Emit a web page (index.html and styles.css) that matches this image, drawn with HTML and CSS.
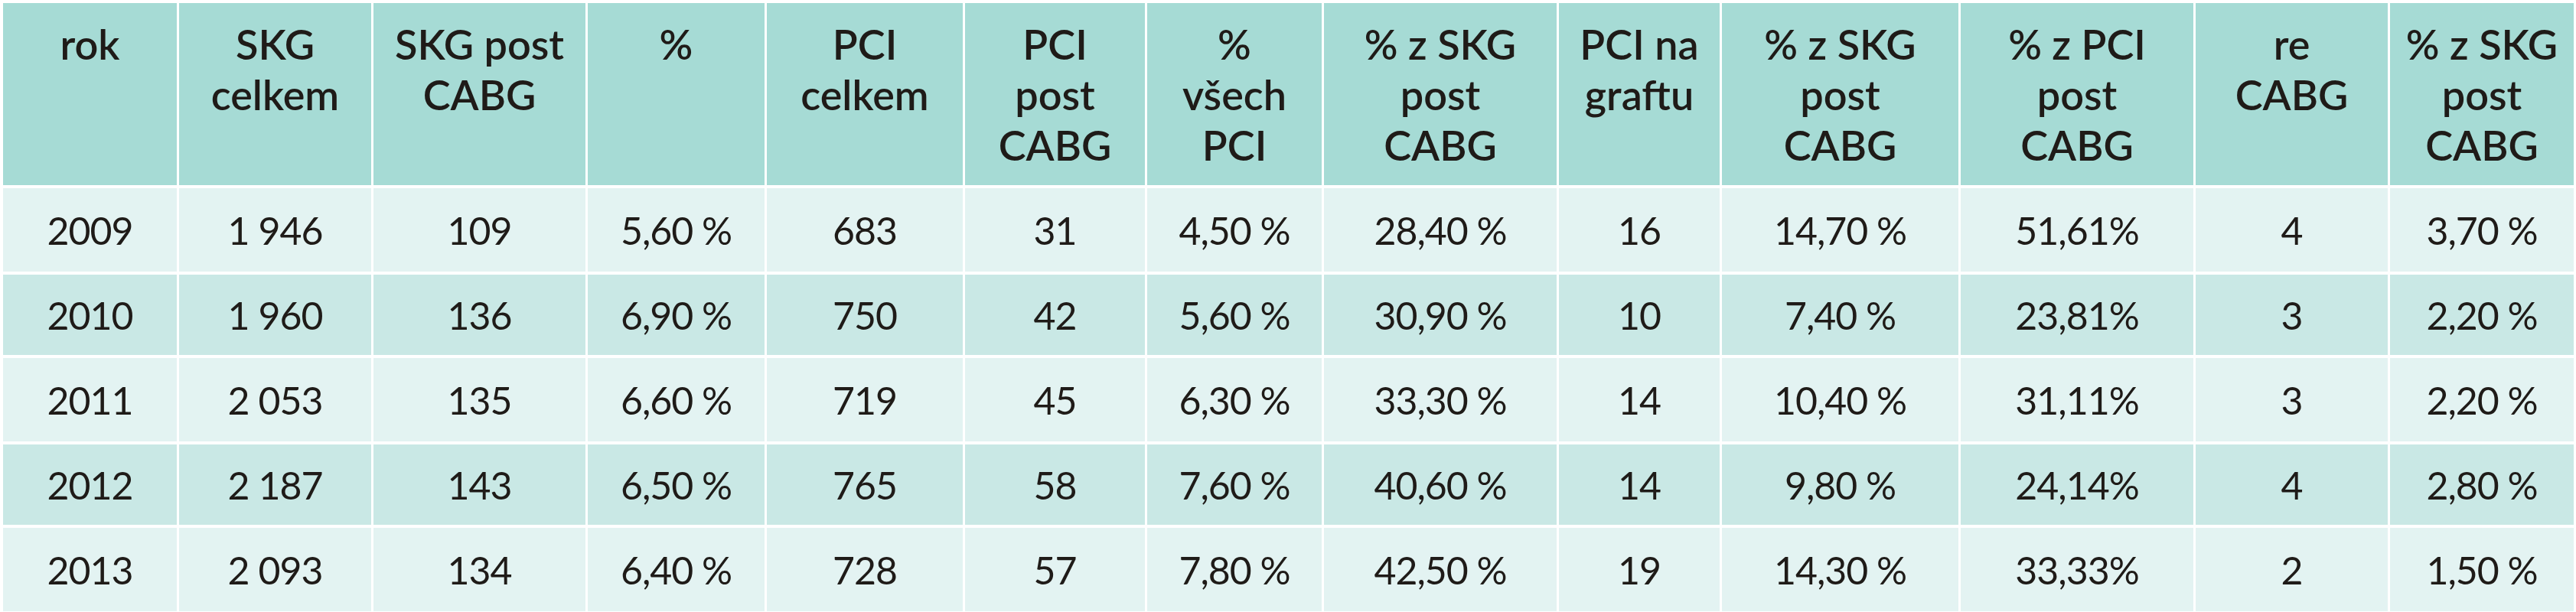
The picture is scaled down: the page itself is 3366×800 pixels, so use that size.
FILE: index.html
```html
<!DOCTYPE html>
<html lang="cs">
<head>
<meta charset="utf-8">
<title>SKG a PCI post CABG</title>
<link rel="stylesheet" href="styles.css">
</head>
<body>
<table class="data">
  <colgroup>
    <col class="c1"><col class="c2"><col class="c3"><col class="c4"><col class="c5"><col class="c6"><col class="c7"><col class="c8"><col class="c9"><col class="c10"><col class="c11"><col class="c12"><col class="c13">
  </colgroup>
  <thead>
    <tr>
      <th>rok</th>
      <th>SKG<br>celkem</th>
      <th>SKG post<br>CABG</th>
      <th>%</th>
      <th>PCI<br>celkem</th>
      <th>PCI<br>post<br>CABG</th>
      <th>%<br>všech<br>PCI</th>
      <th>% z SKG<br>post<br>CABG</th>
      <th>PCI na<br>graftu</th>
      <th>% z SKG<br>post<br>CABG</th>
      <th>% z PCI<br>post<br>CABG</th>
      <th>re<br>CABG</th>
      <th>% z SKG<br>post<br>CABG</th>
    </tr>
  </thead>
  <tbody>
    <tr><td>2009</td><td>1 946</td><td>109</td><td>5,60 %</td><td>683</td><td>31</td><td>4,50 %</td><td>28,40 %</td><td>16</td><td>14,70 %</td><td>51,61%</td><td>4</td><td>3,70 %</td></tr>
    <tr><td>2010</td><td>1 960</td><td>136</td><td>6,90 %</td><td>750</td><td>42</td><td>5,60 %</td><td>30,90 %</td><td>10</td><td>7,40 %</td><td>23,81%</td><td>3</td><td>2,20 %</td></tr>
    <tr><td>2011</td><td>2 053</td><td>135</td><td>6,60 %</td><td>719</td><td>45</td><td>6,30 %</td><td>33,30 %</td><td>14</td><td>10,40 %</td><td>31,11%</td><td>3</td><td>2,20 %</td></tr>
    <tr><td>2012</td><td>2 187</td><td>143</td><td>6,50 %</td><td>765</td><td>58</td><td>7,60 %</td><td>40,60 %</td><td>14</td><td>9,80 %</td><td>24,14%</td><td>4</td><td>2,80 %</td></tr>
    <tr><td>2013</td><td>2 093</td><td>134</td><td>6,40 %</td><td>728</td><td>57</td><td>7,80 %</td><td>42,50 %</td><td>19</td><td>14,30 %</td><td>33,33%</td><td>2</td><td>1,50 %</td></tr>
  </tbody>
</table>
</body>
</html>
```

FILE: styles.css
```css
html, body {
  margin: 0;
  padding: 0;
  background: #ffffff;
  overflow: hidden;
}

body {
  font-family: Lato, "Liberation Sans", sans-serif;
  color: #1f1b18;
}

.data {
  table-layout: fixed;
  width: 3365px;
  margin: 0 0 0 1px;
  border-collapse: separate;
  border-spacing: 3px 4px;
}

.c1 { width: 227px; }
.c2 { width: 251px; }
.c3 { width: 277px; }
.c4 { width: 231px; }
.c5 { width: 256px; }
.c6 { width: 235px; }
.c7 { width: 228px; }
.c8 { width: 304px; }
.c9 { width: 210px; }
.c10 { width: 309px; }
.c11 { width: 304px; }
.c12 { width: 251px; }
.c13 { width: 240px; }

.data th,
.data td {
  padding: 0;
  text-align: center;
  white-space: nowrap;
}

.data thead tr {
  height: 238px;
}

.data th {
  background: #a6dbd5;
  vertical-align: top;
  padding-top: 21px;
  font-size: 54px;
  line-height: 66px;
  font-weight: 600;
}

.data td {
  vertical-align: middle;
  font-size: 50px;
  font-weight: 400;
  line-height: 1.2;
  letter-spacing: -1px;
}

.data tbody tr:nth-child(odd) {
  height: 109px;
}

.data tbody tr:nth-child(even) {
  height: 105px;
}

.data tbody tr:nth-child(odd) td {
  background: #e3f3f2;
}

.data tbody tr:nth-child(even) td {
  background: #c9e8e5;
}
```
